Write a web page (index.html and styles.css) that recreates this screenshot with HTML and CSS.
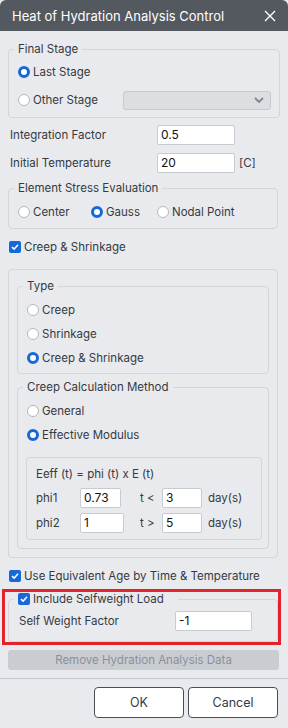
FILE: index.html
```html
<!DOCTYPE html>
<html>
  <head>
    <meta charset="utf-8">
    <link rel="stylesheet" href="styles.css">
    <title>Heat of Hydration Analysis Control</title>
  </head>
  <body>
    <div class="dialog">
      <div class="titlebar">
        <span>Heat of Hydration Analysis Control</span>
        <svg class="close" width="12" height="12" viewBox="0 0 12 12">
          <path d="M1 1 L11 11 M11 1 L1 11" stroke="#fff" stroke-width="1.4" fill="none"/>
        </svg>
      </div>

      <div class="content">
        <fieldset class="group stage">
          <legend>Final Stage</legend>
          <div class="row"><span class="radio on"></span>Last Stage</div>
          <div class="row">
            <span class="radio"></span><span class="grow">Other Stage</span>
            <div class="select">
              <svg width="10" height="6" viewBox="0 0 10 6"><path d="M1 1 L5 5 L9 1" stroke="#80868d" stroke-width="1.8" fill="none"/></svg>
            </div>
          </div>
        </fieldset>

        <div class="field"><span class="label">Integration Factor</span><span class="input">0.5</span></div>
        <div class="field"><span class="label">Initial Temperature</span><span class="input">20</span><span class="unit">[C]</span></div>

        <fieldset class="group stress">
          <legend>Element Stress Evaluation</legend>
          <div class="row">
            <span class="opt c1"><span class="radio"></span>Center</span>
            <span class="opt c2"><span class="radio on"></span>Gauss</span>
            <span class="opt"><span class="radio"></span>Nodal Point</span>
          </div>
        </fieldset>

        <div class="row check-row"><span class="check"></span>Creep &amp; Shrinkage</div>

        <div class="panel">
          <fieldset class="group type">
            <legend>Type</legend>
            <div class="row small"><span class="radio"></span>Creep</div>
            <div class="row small"><span class="radio"></span>Shrinkage</div>
            <div class="row small"><span class="radio on"></span>Creep &amp; Shrinkage</div>
          </fieldset>

          <fieldset class="group method">
            <legend>Creep Calculation Method</legend>
            <div class="row small"><span class="radio"></span>General</div>
            <div class="row small"><span class="radio on"></span>Effective Modulus</div>
            <div class="formula">
              <div class="line">Eeff (t) = phi (t) x E (t)</div>
              <div class="line">
                <span class="plabel">phi1</span><span class="input phi">0.73</span>
                <span class="cmp">t &lt;</span><span class="input day">3</span><span>day(s)</span>
              </div>
              <div class="line second">
                <span class="plabel">phi2</span><span class="input phi wide">1</span>
                <span class="cmp">t &gt;</span><span class="input day">5</span><span>day(s)</span>
              </div>
            </div>
          </fieldset>
        </div>

        <div class="row check-row age"><span class="check"></span>Use Equivalent Age by Time &amp; Temperature</div>

        <div class="highlight">
          <fieldset class="group self">
            <legend><span class="check"></span>Include Selfweight Load</legend>
            <div class="field inner"><span class="label">Self Weight Factor</span><span class="input sw">-1</span></div>
          </fieldset>
        </div>

        <div class="remove">Remove Hydration Analysis Data</div>
      </div>

      <div class="footer">
        <span class="btn">OK</span>
        <span class="btn">Cancel</span>
      </div>
    </div>
  </body>
</html>
```

FILE: styles.css
```css
html, body {
  margin: 0;
  background: #e9eaee;
}

body {
  font-family: Inter, "Noto Sans", sans-serif;
  font-size: 11.5px;
  color: #353a41;
  white-space: nowrap;
}

.dialog {
  width: 288px;
  height: 728px;
  background: #e9eaee;
  border-radius: 6px 6px 0 0;
  overflow: hidden;
}

.titlebar {
  height: 31px;
  background: #53595f;
  color: #fff;
  display: flex;
  align-items: center;
  justify-content: space-between;
  padding: 0 12px 0 12px;
  font-size: 13px;
}

.content {
  padding: 10px 10px 0 8px;
}

/* group boxes */
.group {
  margin: 0;
  border: 1px solid #d3d5d9;
  border-radius: 4px;
  padding: 1px 8px 3px 9px;
}

.group legend {
  margin-left: -4px;
  padding: 0 4px;
  line-height: 16px;
  height: 16px;
}

.row {
  display: flex;
  align-items: center;
  height: 28px;
}

.row.small {
  height: 24px;
}

.grow {
  width: 90px;
}

.radio {
  width: 12px;
  height: 12px;
  box-sizing: border-box;
  border-radius: 50%;
  border: 1px solid #b4b8be;
  background: #fff;
  margin-right: 3px;
  flex: none;
}

.radio.on {
  border: 3.5px solid #1668d8;
}

.check {
  display: inline-block;
  width: 12px;
  height: 12px;
  border-radius: 2px;
  background: #1668d8 url("data:image/svg+xml,%3Csvg xmlns='http://www.w3.org/2000/svg' width='12' height='12' viewBox='0 0 12 12'%3E%3Cpath d='M3 6.2 L5.1 8.2 L9 3.8' stroke='white' stroke-width='1.6' fill='none'/%3E%3C/svg%3E") center no-repeat;
  margin-right: 3px;
  vertical-align: -2px;
  flex: none;
}

.select {
  width: 148px;
  height: 19px;
  border: 1px solid #c6c9ce;
  border-radius: 3px;
  background: #dcdee2;
  display: flex;
  align-items: center;
  justify-content: flex-end;
  padding-right: 6px;
  box-sizing: border-box;
}

.field {
  display: flex;
  align-items: center;
  height: 28px;
  padding-left: 2px;
}

.field .label {
  width: 147px;
}

.input {
  box-sizing: border-box;
  height: 20px;
  width: 78px;
  background: #fff;
  border: 1px solid #c8cbd0;
  border-radius: 2px;
  padding-left: 3px;
  line-height: 18px;
  color: #111;
  font-size: 12px;
}

.unit {
  margin-left: 4px;
}

.stage {
  margin-bottom: 3px;
}

.stress {
  margin-top: 3px;
  padding-top: 2px;
  padding-bottom: 2px;
}

.opt {
  display: flex;
  align-items: center;
}

.c1 {
  width: 73px;
}

.c2 {
  width: 66px;
}

.check-row {
  margin-top: 4px;
  padding-left: 1px;
}

.panel {
  margin-top: 8px;
  border: 1px solid #d3d5d9;
  border-radius: 4px;
  padding: 8px;
}

.type {
  padding-top: 4px;
}

.method {
  margin-top: 5px;
  padding-top: 4px;
  padding-bottom: 8px;
}

.formula {
  margin: 10px -2px 0 -1px;
  border: 1px solid #d3d5d9;
  border-radius: 4px;
  padding: 4px 9px;
}

.formula .line {
  display: flex;
  align-items: center;
  height: 24px;
}

.formula .second {
  margin-top: 1px;
}

.plabel {
  width: 44px;
}

.input.phi {
  width: 41px;
  margin-right: 19px;
}

.input.phi.wide {
  width: 44px;
  margin-right: 16px;
}

.cmp {
  width: 22px;
}

.input.day {
  width: 40px;
  margin-right: 6px;
}

.age {
  margin-top: 4px;
}

.highlight {
  position: relative;
  margin-top: 1px;
}

.highlight::after {
  content: "";
  position: absolute;
  top: -2px;
  left: -6px;
  right: -3px;
  bottom: -3px;
  border: 3px solid #e3232b;
  pointer-events: none;
}

.self {
  padding-top: 2px;
  padding-bottom: 8px;
}

.self legend {
  display: flex;
  align-items: center;
  padding-right: 14px;
}

.field.inner {
  height: 24px;
  padding-left: 1px;
}

.field.inner .label {
  width: 156px;
}

.input.sw {
  width: 77px;
}

.remove {
  margin-top: 8px;
  margin-right: -1px;
  height: 20px;
  line-height: 20px;
  background: #c9cdd2;
  border-radius: 3px;
  text-align: center;
  color: #8b9097;
}

.footer {
  margin-top: 8px;
  border-top: 1px solid #c5c8cc;
  display: flex;
  justify-content: flex-end;
  gap: 4px;
  padding: 8px 10px 0 0;
}

.btn {
  box-sizing: border-box;
  width: 90px;
  height: 31px;
  border: 1.5px solid #4a4f56;
  border-radius: 4px;
  background: #fff;
  display: flex;
  align-items: center;
  justify-content: center;
  font-size: 12.5px;
}
```
